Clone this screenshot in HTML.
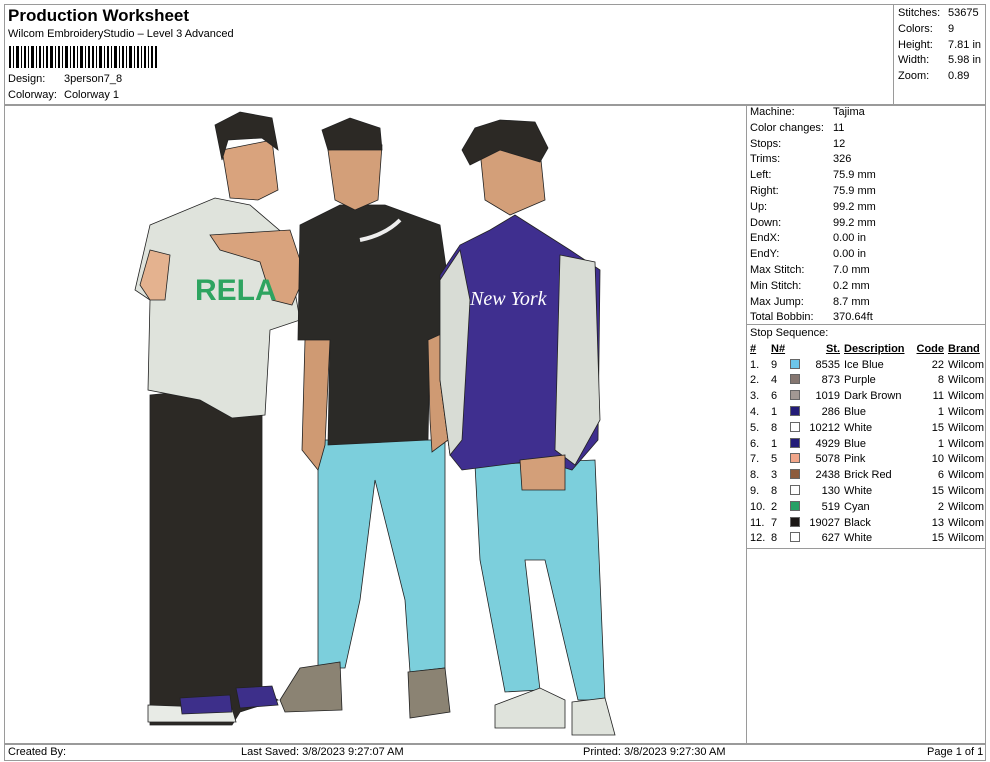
<!DOCTYPE html>
<html><head><meta charset="utf-8"><style>
*{margin:0;padding:0;box-sizing:border-box}
body{width:990px;height:762px;background:#fff;font-family:"Liberation Sans",sans-serif;color:#000;position:relative;overflow:hidden;font-size:11px}
.a{position:absolute;white-space:nowrap}
.ln{position:absolute;background:#9a9a9a}
table{border-collapse:collapse;font-size:11px}
td{padding:0;height:15.8px;white-space:nowrap}
.sw{display:inline-block;width:10px;height:10px;border:1px solid #666;vertical-align:-1px}
</style></head><body>
<!-- frame lines -->
<div class="ln" style="left:4px;top:4px;width:982px;height:1px"></div>
<div class="ln" style="left:4px;top:4px;width:1px;height:757px"></div>
<div class="ln" style="left:985px;top:4px;width:1px;height:757px"></div>
<div class="ln" style="left:4px;top:104px;width:982px;height:2px"></div>
<div class="ln" style="left:893px;top:4px;width:1px;height:100px"></div>
<div class="ln" style="left:746px;top:104px;width:1px;height:640px"></div>
<div class="ln" style="left:746px;top:324px;width:240px;height:1px"></div>
<div class="ln" style="left:746px;top:548px;width:240px;height:1px"></div>
<div class="ln" style="left:4px;top:743px;width:982px;height:2px"></div>
<div class="ln" style="left:4px;top:760px;width:982px;height:1px"></div>

<div class="a" style="left:8px;top:6px;font-size:17px;font-weight:bold">Production Worksheet</div>
<div class="a" style="left:8px;top:28px">Wilcom EmbroideryStudio – Level 3 Advanced</div>
<svg class="a" style="left:9px;top:46px" width="150" height="22">
<g fill="#000">
<rect x="0" width="2" height="22"/><rect x="4" width="1" height="22"/><rect x="7" width="3" height="22"/><rect x="12" width="1" height="22"/><rect x="15" width="2" height="22"/><rect x="19" width="1" height="22"/><rect x="22" width="3" height="22"/><rect x="27" width="1" height="22"/><rect x="30" width="2" height="22"/><rect x="34" width="1" height="22"/><rect x="37" width="2" height="22"/><rect x="41" width="3" height="22"/><rect x="46" width="1" height="22"/><rect x="49" width="2" height="22"/><rect x="53" width="1" height="22"/><rect x="56" width="3" height="22"/><rect x="61" width="1" height="22"/><rect x="64" width="2" height="22"/><rect x="68" width="1" height="22"/><rect x="71" width="3" height="22"/><rect x="76" width="1" height="22"/><rect x="79" width="2" height="22"/><rect x="83" width="2" height="22"/><rect x="87" width="1" height="22"/><rect x="90" width="3" height="22"/><rect x="95" width="1" height="22"/><rect x="98" width="2" height="22"/><rect x="102" width="1" height="22"/><rect x="105" width="3" height="22"/><rect x="110" width="1" height="22"/><rect x="113" width="2" height="22"/><rect x="117" width="1" height="22"/><rect x="120" width="3" height="22"/><rect x="125" width="1" height="22"/><rect x="128" width="2" height="22"/><rect x="132" width="1" height="22"/><rect x="135" width="2" height="22"/><rect x="139" width="1" height="22"/><rect x="142" width="2" height="22"/><rect x="146" width="2" height="22"/>
</g></svg>
<div class="a" style="left:8px;top:73px">Design:</div><div class="a" style="left:64px;top:73px">3person7_8</div>
<div class="a" style="left:8px;top:89px">Colorway:</div><div class="a" style="left:64px;top:89px">Colorway 1</div>

<div class="a" style="left:898px;top:6px;line-height:15.8px">Stitches:<br>Colors:<br>Height:<br>Width:<br>Zoom:</div>
<div class="a" style="left:948px;top:6px;line-height:15.8px">53675<br>9<br>7.81 in<br>5.98 in<br>0.89</div>

<div class="a" style="left:750px;top:105px;line-height:15.8px">Machine:<br>Color changes:<br>Stops:<br>Trims:<br>Left:<br>Right:<br>Up:<br>Down:<br>EndX:<br>EndY:<br>Max Stitch:<br>Min Stitch:<br>Max Jump:<br>Total Bobbin:<br>Stop Sequence:</div>
<div class="a" style="left:833px;top:105px;line-height:15.8px">Tajima<br>11<br>12<br>326<br>75.9 mm<br>75.9 mm<br>99.2 mm<br>99.2 mm<br>0.00 in<br>0.00 in<br>7.0 mm<br>0.2 mm<br>8.7 mm<br>370.64ft</div>

<table class="a" style="left:750px;top:341px">
<tr style="font-weight:bold;text-decoration:underline"><td style="width:21px">#</td><td style="width:19px">N#</td><td style="width:14px"></td><td style="width:36px;text-align:right">St.</td><td style="width:70px;padding-left:4px">Description</td><td style="width:34px;text-align:right">Code</td><td style="padding-left:4px">Brand</td></tr>
<tr><td>1.</td><td>9</td><td><span class="sw" style="background:#6cc6ea"></span></td><td align="right">8535</td><td style="padding-left:4px">Ice Blue</td><td align="right">22</td><td style="padding-left:4px">Wilcom</td></tr>
<tr><td>2.</td><td>4</td><td><span class="sw" style="background:#857670"></span></td><td align="right">873</td><td style="padding-left:4px">Purple</td><td align="right">8</td><td style="padding-left:4px">Wilcom</td></tr>
<tr><td>3.</td><td>6</td><td><span class="sw" style="background:#a19893"></span></td><td align="right">1019</td><td style="padding-left:4px">Dark Brown</td><td align="right">11</td><td style="padding-left:4px">Wilcom</td></tr>
<tr><td>4.</td><td>1</td><td><span class="sw" style="background:#231c78"></span></td><td align="right">286</td><td style="padding-left:4px">Blue</td><td align="right">1</td><td style="padding-left:4px">Wilcom</td></tr>
<tr><td>5.</td><td>8</td><td><span class="sw" style="background:#fff"></span></td><td align="right">10212</td><td style="padding-left:4px">White</td><td align="right">15</td><td style="padding-left:4px">Wilcom</td></tr>
<tr><td>6.</td><td>1</td><td><span class="sw" style="background:#231c78"></span></td><td align="right">4929</td><td style="padding-left:4px">Blue</td><td align="right">1</td><td style="padding-left:4px">Wilcom</td></tr>
<tr><td>7.</td><td>5</td><td><span class="sw" style="background:#f1a68a"></span></td><td align="right">5078</td><td style="padding-left:4px">Pink</td><td align="right">10</td><td style="padding-left:4px">Wilcom</td></tr>
<tr><td>8.</td><td>3</td><td><span class="sw" style="background:#8d5c3e"></span></td><td align="right">2438</td><td style="padding-left:4px">Brick Red</td><td align="right">6</td><td style="padding-left:4px">Wilcom</td></tr>
<tr><td>9.</td><td>8</td><td><span class="sw" style="background:#fff"></span></td><td align="right">130</td><td style="padding-left:4px">White</td><td align="right">15</td><td style="padding-left:4px">Wilcom</td></tr>
<tr><td>10.</td><td>2</td><td><span class="sw" style="background:#27a066"></span></td><td align="right">519</td><td style="padding-left:4px">Cyan</td><td align="right">2</td><td style="padding-left:4px">Wilcom</td></tr>
<tr><td>11.</td><td>7</td><td><span class="sw" style="background:#1a1614"></span></td><td align="right">19027</td><td style="padding-left:4px">Black</td><td align="right">13</td><td style="padding-left:4px">Wilcom</td></tr>
<tr><td>12.</td><td>8</td><td><span class="sw" style="background:#fff"></span></td><td align="right">627</td><td style="padding-left:4px">White</td><td align="right">15</td><td style="padding-left:4px">Wilcom</td></tr>
</table>

<!-- illustration -->
<svg class="a" style="left:0;top:0" width="746" height="744">
<g stroke="#222" stroke-width="0.8">
<!-- person 1 -->
<polygon points="150,395 250,385 262,415 262,690 278,700 240,712 232,725 150,725 150,700" fill="#2c2925"/>
<polygon points="148,705 232,708 236,722 148,722" fill="#e8ebe6"/>
<polygon points="180,698 230,695 232,712 182,714" fill="#3d2f8a"/>
<polygon points="236,688 272,686 278,705 240,708" fill="#3d2f8a"/>
<polygon points="150,225 215,198 250,205 285,235 300,320 270,330 265,415 232,418 200,400 148,390 150,300 135,290" fill="#dfe3dc"/>
<polygon points="140,285 150,250 170,255 165,300 150,300" fill="#e4b28f"/>
<polygon points="210,235 290,230 305,275 292,305 272,300 260,262 220,250" fill="#d9a37d"/>
<text x="195" y="300" font-family="Liberation Sans" font-weight="bold" font-size="30" fill="#2ea460" stroke="none">RELA</text>
<polygon points="222,150 272,140 278,190 258,200 230,198" fill="#d9a37d"/>
<polygon points="215,125 240,112 272,118 278,150 262,138 228,140 222,160" fill="#2c2925"/>
<!-- person 2 -->
<polygon points="318,440 445,440 445,668 410,672 405,600 375,480 360,600 345,668 318,668" fill="#7ccfdc"/>
<polygon points="280,700 300,668 340,662 342,710 285,712" fill="#8b8373"/>
<polygon points="408,672 445,668 450,712 410,718" fill="#8b8373"/>
<polygon points="300,225 340,205 385,205 440,225 455,330 430,340 428,440 328,445 330,340 298,340" fill="#2b2a27"/>
<polygon points="305,340 330,340 325,445 318,470 302,450" fill="#cf9a73"/>
<polygon points="428,340 450,330 448,440 432,452 430,420" fill="#cf9a73"/>
<path d="M360,240 Q385,235 400,220" stroke="#eee" stroke-width="4" fill="none"/>
<polygon points="328,150 382,145 378,200 355,210 335,200" fill="#d39f79"/>
<polygon points="322,130 350,118 380,128 382,150 328,150" fill="#2c2925"/>
<!-- person 3 -->
<polygon points="475,465 595,460 605,700 578,700 545,560 525,560 540,690 505,692 480,560" fill="#7ccfdc"/>
<polygon points="495,705 540,688 565,700 565,728 495,728" fill="#dfe3dc"/>
<polygon points="572,702 605,698 615,735 572,735" fill="#dfe3dc"/>
<polygon points="440,275 460,245 490,230 515,215 570,250 600,270 598,440 572,470 540,460 462,470 450,455 440,380" fill="#3f2f8f"/>
<polygon points="440,280 460,250 470,300 462,440 450,455 440,380" fill="#d8dcd5"/>
<polygon points="560,255 595,262 600,420 575,465 555,450" fill="#d8dcd5"/>
<text x="470" y="305" font-family="Liberation Serif" font-style="italic" font-size="20" fill="#fff" stroke="none">New York</text>
<polygon points="520,460 565,455 565,490 522,490" fill="#d39f79"/>
<polygon points="480,150 540,150 545,200 510,215 485,200" fill="#d39f79"/>
<polygon points="462,150 475,128 500,120 535,122 548,148 540,162 500,150 470,165" fill="#2c2925"/>
</g>
</svg>

<div class="a" style="left:8px;top:746px;font-size:11px">Created By:</div>
<div class="a" style="left:241px;top:746px">Last Saved: 3/8/2023 9:27:07 AM</div>
<div class="a" style="left:583px;top:746px">Printed: 3/8/2023 9:27:30 AM</div>
<div class="a" style="left:927px;top:746px">Page 1 of 1</div>
</body></html>
